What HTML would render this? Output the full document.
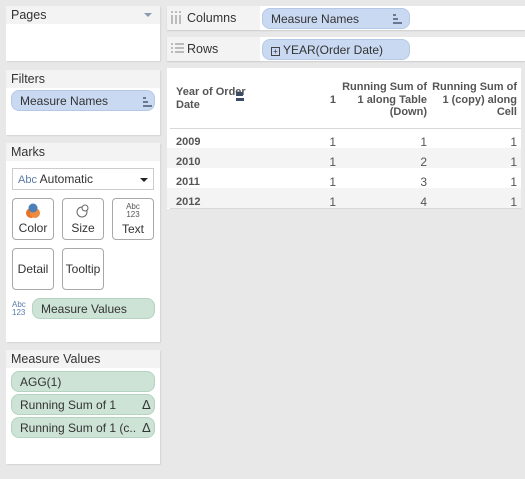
<!DOCTYPE html>
<html><head><style>
*{margin:0;padding:0;box-sizing:border-box}
body{width:525px;height:479px;background:#e8e8e8;font-family:"Liberation Sans",Arial,sans-serif;font-size:12px;color:#333;position:relative;overflow:hidden}
.a{position:absolute}
.panel{position:absolute;background:#fff;box-shadow:1px 1px 1px #d4d4d4}
.hd{background:#f3f3f3;height:18px;padding:2px 0 0 5px;font-size:12.5px;color:#333}
.pill{position:absolute;border-radius:8px;padding:3px 0 0 8px;font-size:12px;color:#333;height:21px;white-space:nowrap;overflow:hidden}
.blue{background:#c9d9f1;border:1px solid #b4c8e6}
.green{background:#cce3d5;border:1px solid #b5d3c1}
.btn{position:absolute;width:42px;height:42px;border:1px solid #a8a8a8;border-radius:4px;background:#fff;text-align:center;font-size:12px}
.bars{position:absolute;width:9px;height:10px}
.bars i{position:absolute;left:0;height:2px;background:#6a7890}
.tb{position:absolute;font-family:"Liberation Sans",Arial,sans-serif;font-weight:bold;font-size:11px;color:#555}
.r{text-align:right}
</style></head><body>

<div class="panel" style="left:6px;top:6px;width:154px;height:55px"><div class="hd">Pages</div>
<div class="a" style="right:8px;top:7px;width:0;height:0;border-left:4px solid transparent;border-right:4px solid transparent;border-top:4px solid #8a9ab0"></div></div>

<div class="panel" style="left:6px;top:70px;width:154px;height:65px"><div class="hd">Filters</div>
<div class="pill blue" style="left:5px;top:20px;width:144px">Measure Names</div>
<div class="bars" style="left:137px;top:27px"><i style="top:0;width:3px"></i><i style="top:4px;width:5px"></i><i style="top:8px;width:9px"></i></div>
</div>

<div class="panel" style="left:6px;top:143px;width:154px;height:199px"><div class="hd">Marks</div>
<div class="a" style="left:6px;top:25px;width:142px;height:22px;border:1px solid #ccc;background:#fff;padding:3px 0 0 5px"><span style="color:#5a7bab;font-size:11px">Abc</span> Automatic
<div class="a" style="right:5px;top:9px;border-left:4px solid transparent;border-right:4px solid transparent;border-top:4px solid #222"></div></div>
<div class="btn" style="left:6px;top:55px"><svg width="18" height="16" style="margin-top:4px"><circle cx="7" cy="10" r="5" fill="#e8742a"/><circle cx="11" cy="10" r="5" fill="#f08a3c"/><circle cx="9" cy="5" r="4.5" fill="#4a7fb8"/></svg><div style="margin-top:-1px">Color</div></div>
<div class="btn" style="left:56px;top:55px"><svg width="16" height="16" style="margin-top:4px"><circle cx="7" cy="9" r="5" fill="none" stroke="#666"/><circle cx="10" cy="5" r="3" fill="#fff" stroke="#666"/></svg><div style="margin-top:-1px">Size</div></div>
<div class="btn" style="left:106px;top:55px"><div style="font-size:8px;line-height:8px;margin-top:4px;color:#555">Abc<br>123</div><div style="margin-top:3px">Text</div></div>
<div class="btn" style="left:6px;top:105px;padding-top:13px">Detail</div>
<div class="btn" style="left:56px;top:105px;padding-top:13px">Tooltip</div>
<div class="a" style="left:6px;top:158px;font-size:8px;line-height:8px;color:#5a7bab">Abc<br>123</div>
<div class="pill green" style="left:26px;top:155px;width:123px">Measure Values</div>
</div>

<div class="panel" style="left:6px;top:350px;width:154px;height:114px"><div class="hd">Measure Values</div>
<div class="pill green" style="left:5px;top:21px;width:144px">AGG(1)</div>
<div class="pill green" style="left:5px;top:44px;width:144px">Running Sum of 1</div><div class="a" style="left:136px;top:47px;font-size:13px">Δ</div>
<div class="pill green" style="left:5px;top:67px;width:144px">Running Sum of 1 (c..</div><div class="a" style="left:136px;top:70px;font-size:13px">Δ</div>
</div>

<div class="a" style="left:167px;top:6px;width:358px;height:24px;background:#fff;box-shadow:0 1px 1px #ccc"></div>
<div class="a" style="left:167px;top:6px;width:93px;height:24px;background:#f3f3f3;padding:5px 0 0 20px;font-size:12.5px">Columns</div>
<svg class="a" style="left:171px;top:11px" width="12" height="14"><g fill="#bbb"><rect x="0" y="0" width="2" height="2"/><rect x="4" y="0" width="2" height="2"/><rect x="8" y="0" width="2" height="2"/><rect x="0" y="4" width="2" height="9"/><rect x="4" y="4" width="2" height="9"/><rect x="8" y="4" width="2" height="9"/></g></svg>
<div class="pill blue" style="left:262px;top:8px;width:148px">Measure Names</div>
<div class="bars" style="left:393px;top:14px"><i style="top:0;width:3px"></i><i style="top:4px;width:5px"></i><i style="top:8px;width:9px"></i></div>

<div class="a" style="left:167px;top:37px;width:358px;height:24px;background:#fff;box-shadow:0 1px 1px #ccc"></div>
<div class="a" style="left:167px;top:37px;width:93px;height:24px;background:#f3f3f3;padding:5px 0 0 20px;font-size:12.5px">Rows</div>
<svg class="a" style="left:171px;top:43px" width="14" height="12"><g fill="#bbb"><rect x="0" y="0" width="2" height="2"/><rect x="4" y="0" width="9" height="2"/><rect x="0" y="4" width="2" height="2"/><rect x="4" y="4" width="9" height="2"/><rect x="0" y="8" width="2" height="2"/><rect x="4" y="8" width="9" height="2"/></g></svg>
<div class="pill blue" style="left:262px;top:39px;width:148px"><span style="display:inline-block;width:9px;height:9px;border:1px solid #444;font-size:8px;line-height:7px;text-align:center;vertical-align:0px;margin-right:3px">+</span>YEAR(Order Date)</div>

<div class="a" style="left:167px;top:68px;width:354px;height:141px;background:#fff"></div>
<div class="a" style="left:167px;top:148px;width:354px;height:20px;background:#f4f4f4"></div>
<div class="a" style="left:167px;top:188px;width:354px;height:20px;background:#f4f4f4"></div>
<div class="a" style="left:170px;top:128px;width:351px;height:1px;background:#d8d8d8"></div>
<div class="a" style="left:170px;top:208px;width:351px;height:1px;background:#d8d8d8"></div>
<div class="tb" style="left:176px;top:86px;line-height:13px">Year of Order<br>Date</div>
<div class="a" style="left:236px;top:92px;width:10px;height:9px"><div style="height:4px;width:7px;background:#3d4c66"></div><div style="height:3px;width:8px;background:#3d4c66;margin-top:2px"></div></div>
<div class="tb r" style="left:300px;top:94px;width:36px">1</div>
<div class="tb r" style="left:330px;top:81px;width:97px;line-height:12.5px">Running Sum of<br>1 along Table<br>(Down)</div>
<div class="tb r" style="left:420px;top:81px;width:97px;line-height:12.5px">Running Sum of<br>1 (copy) along<br>Cell</div>
<div class="tb" style="left:176px;top:132px;line-height:20px">2009<br>2010<br>2011<br>2012</div>
<div class="tb r" style="left:300px;top:132px;width:36px;line-height:20px;font-weight:normal;font-size:12px">1<br>1<br>1<br>1</div>
<div class="tb r" style="left:330px;top:132px;width:97px;line-height:20px;font-weight:normal;font-size:12px">1<br>2<br>3<br>4</div>
<div class="tb r" style="left:420px;top:132px;width:97px;line-height:20px;font-weight:normal;font-size:12px">1<br>1<br>1<br>1</div>
</body></html>
